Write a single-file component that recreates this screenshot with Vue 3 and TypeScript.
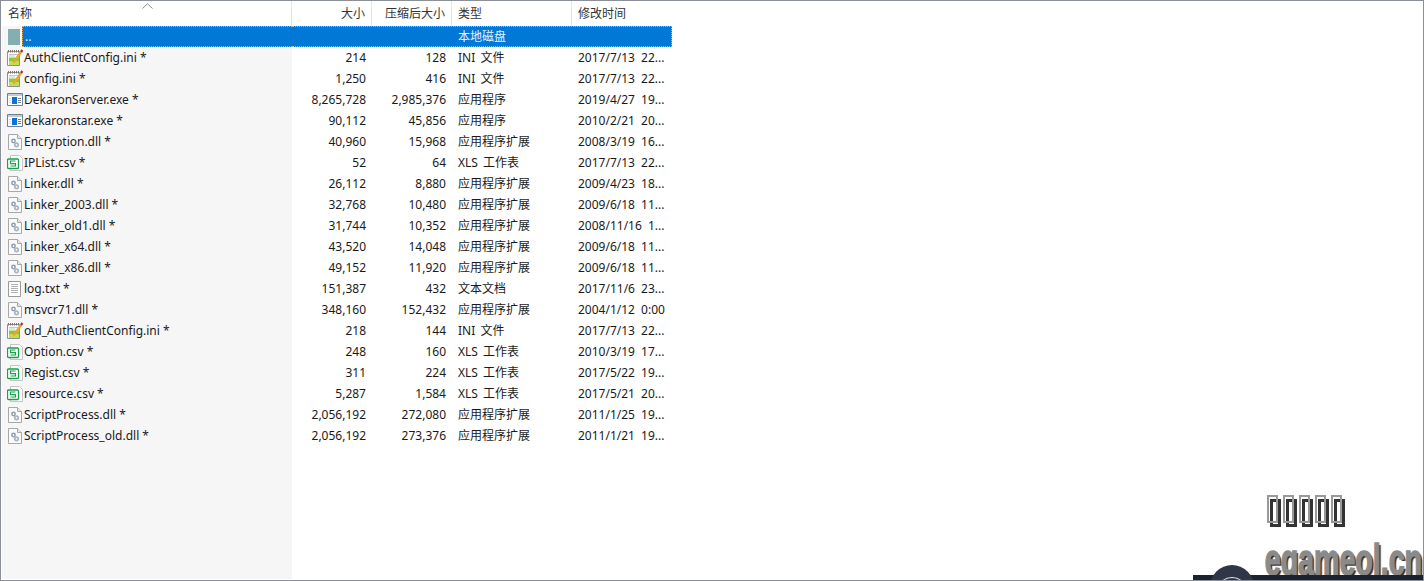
<template>
  <div class="window">
    <div class="list">
      <div class="head">
        <div class="cell name">名称<span class="sort"><svg width="11" height="6" viewBox="0 0 11 6"><path d="M0.5 5.5L5.5 0.8L10.5 5.5" fill="none" stroke="#8a8a8a" /></svg></span></div>
        <div class="cell size right">大小</div>
        <div class="cell packed right">压缩后大小</div>
        <div class="cell type">类型</div>
        <div class="cell time">修改时间</div>
      </div>
      <div class="row up">
        <div class="cell name">
          <span class="icon"><span class="up-icon"></span></span>
          <span class="up-text">..</span>
        </div>
        <div class="selected">
          <div class="cell size"></div>
          <div class="cell packed"></div>
          <div class="cell type">本地磁盘</div>
          <div class="cell time"></div>
        </div>
      </div>
      <div v-for="f in files" :key="f.name" class="row">
        <div class="cell name">
          <span class="icon">
            <svg v-if="f.icon === 'ini'" width="18" height="18" viewBox="0 0 18 18">
              <path d="M1.5 2.5h12v14h-12z" fill="#fff" stroke="#8f8f8f" />
              <path d="M2.5 1v2.5M4.5 1v2.5M6.5 1v2.5M8.5 1v2.5M10.5 1v2.5M12.5 1v2.5" stroke="#777" />
              <path d="M3 5.5h9M3 7h6" stroke="#c8c8c8" />
              <path d="M3 8.5h10V16H3z" fill="#8cc63f" />
              <path d="M3 12h10v4H3z" fill="#c4dc50" />
              <path d="M7.5 13.5L15 3" stroke="#eda52a" stroke-width="2.4" />
              <path d="M15 3l1.4-2" stroke="#a8322a" stroke-width="2.2" />
            </svg>
            <svg v-else-if="f.icon === 'exe'" width="16" height="13" viewBox="0 0 16 13">
              <path d="M0.5 0.5h15v12h-15z" fill="#fff" stroke="#72808e" />
              <path d="M1 1h14v2H1z" fill="#c3ccd5" />
              <path d="M5 4h5v7H5z" fill="#0a72d8" />
              <path d="M11 5.5h3M11 7.5h3M11 9.5h3" stroke="#72808e" />
              <path d="M2 5.5h2M2 7.5h2M2 9.5h2" stroke="#d5dae0" />
            </svg>
            <svg v-else-if="f.icon === 'dll'" width="14" height="16" viewBox="0 0 14 16">
              <path d="M0.5 0.5h9l4 4v11h-13z" fill="#fafafa" stroke="#a8a8a8" />
              <path d="M9.5 0.5v4h4" fill="#e8e8e8" stroke="#a8a8a8" />
              <circle cx="5.5" cy="7" r="2.4" fill="#8f9daa" />
              <circle cx="8.5" cy="10.8" r="2.6" fill="#aab5c0" />
              <circle cx="5.5" cy="7" r="0.9" fill="#fff" />
              <circle cx="8.5" cy="10.8" r="0.9" fill="#fff" />
            </svg>
            <svg v-else-if="f.icon === 'csv'" width="16" height="16" viewBox="0 0 16 16">
              <path d="M3.5 0.5h9l3 3v12h-12z" fill="#fff" stroke="#c4c4c4" />
              <rect x="0.5" y="4" width="11" height="9.5" rx="1" fill="#fff" stroke="#17a04c" stroke-width="1.3" />
              <path d="M8.5 6H3.5v2.6h5v2.4H3.5" fill="none" stroke="#17a04c" stroke-width="1.2" />
            </svg>
            <svg v-else width="13" height="16" viewBox="0 0 13 16">
              <path d="M0.5 0.5h12v15h-12z" fill="#fff" stroke="#9a9a9a" />
              <path d="M3 3.5h7M3 5.5h7M3 7.5h7M3 9.5h7M3 11.5h7" stroke="#b0b0b0" />
            </svg>
          </span>
          <span>{{ f.name }} *</span>
        </div>
        <div class="cell size right">{{ f.size }}</div>
        <div class="cell packed right">{{ f.packed }}</div>
        <div class="cell type">{{ f.type }}</div>
        <div class="cell time">{{ f.time }}</div>
      </div>
    </div>

    <div class="boxes">
      <span v-for="n in 5" :key="n" class="box"></span>
    </div>
    <div class="site">egameol.cn</div>
    <div class="bar"><span class="bar-badge"></span></div>
  </div>
</template>

<script setup lang="ts">
type FileRow = {
  name: string
  size: string
  packed: string
  type: string
  time: string
  icon: 'ini' | 'exe' | 'dll' | 'csv' | 'txt'
}

const DLL = '应用程序扩展'
const XLS = 'XLS 工作表'
const INI = 'INI 文件'
const EXE = '应用程序'

const files: FileRow[] = [
  { name: 'AuthClientConfig.ini', size: '214', packed: '128', type: INI, time: '2017/7/13 22...', icon: 'ini' },
  { name: 'config.ini', size: '1,250', packed: '416', type: INI, time: '2017/7/13 22...', icon: 'ini' },
  { name: 'DekaronServer.exe', size: '8,265,728', packed: '2,985,376', type: EXE, time: '2019/4/27 19...', icon: 'exe' },
  { name: 'dekaronstar.exe', size: '90,112', packed: '45,856', type: EXE, time: '2010/2/21 20...', icon: 'exe' },
  { name: 'Encryption.dll', size: '40,960', packed: '15,968', type: DLL, time: '2008/3/19 16...', icon: 'dll' },
  { name: 'IPList.csv', size: '52', packed: '64', type: XLS, time: '2017/7/13 22...', icon: 'csv' },
  { name: 'Linker.dll', size: '26,112', packed: '8,880', type: DLL, time: '2009/4/23 18...', icon: 'dll' },
  { name: 'Linker_2003.dll', size: '32,768', packed: '10,480', type: DLL, time: '2009/6/18 11...', icon: 'dll' },
  { name: 'Linker_old1.dll', size: '31,744', packed: '10,352', type: DLL, time: '2008/11/16 1...', icon: 'dll' },
  { name: 'Linker_x64.dll', size: '43,520', packed: '14,048', type: DLL, time: '2009/6/18 11...', icon: 'dll' },
  { name: 'Linker_x86.dll', size: '49,152', packed: '11,920', type: DLL, time: '2009/6/18 11...', icon: 'dll' },
  { name: 'log.txt', size: '151,387', packed: '432', type: '文本文档', time: '2017/11/6 23...', icon: 'txt' },
  { name: 'msvcr71.dll', size: '348,160', packed: '152,432', type: DLL, time: '2004/1/12 0:00', icon: 'dll' },
  { name: 'old_AuthClientConfig.ini', size: '218', packed: '144', type: INI, time: '2017/7/13 22...', icon: 'ini' },
  { name: 'Option.csv', size: '248', packed: '160', type: XLS, time: '2010/3/19 17...', icon: 'csv' },
  { name: 'Regist.csv', size: '311', packed: '224', type: XLS, time: '2017/5/22 19...', icon: 'csv' },
  { name: 'resource.csv', size: '5,287', packed: '1,584', type: XLS, time: '2017/5/21 20...', icon: 'csv' },
  { name: 'ScriptProcess.dll', size: '2,056,192', packed: '272,080', type: DLL, time: '2011/1/25 19...', icon: 'dll' },
  { name: 'ScriptProcess_old.dll', size: '2,056,192', packed: '273,376', type: DLL, time: '2011/1/21 19...', icon: 'dll' },
]
</script>

<style>
html,
body {
  margin: 0;
  background: #fff;
}
</style>

<style scoped>
.window {
  position: relative;
  height: 581px;
  box-sizing: border-box;
  border: 1px solid #8a8f9a;
  background: #fff;
  font-family: "Noto Sans", "Noto Sans CJK SC", sans-serif;
  font-size: 12px;
  color: #1a1a1a;
  overflow: hidden;
}

.list {
  width: 671px;
  height: 578px;
  background: linear-gradient(to right, #f6f6f6 290px, #fff 290px) 1px 0 no-repeat;
}

.head {
  display: flex;
  height: 25px;
  background: #fff;
  color: #333;
}

.head .cell {
  height: 25px;
  line-height: 25px;
  border-right: 1px solid #e6e6e6;
}

.row {
  display: flex;
  height: 21px;
  line-height: 21px;
}

.selected {
  display: flex;
  flex: 1;
  min-width: 0;
  box-sizing: border-box;
  line-height: 19px;
  background: #0078d7;
  color: #e8f2fb;
  border: 1px dotted #d9b070;
  border-left: 0;
}

.cell {
  padding: 0 5px 0 6px;
  box-sizing: border-box;
  white-space: nowrap;
  overflow: hidden;
}

.name {
  width: 291px;
  flex: none;
  display: flex;
  align-items: center;
  position: relative;
  padding: 0 0 0 4px;
  overflow: visible;
}

.head .name {
  display: block;
  padding-left: 7px;
}

.sort {
  position: absolute;
  left: 141px;
  top: 0;
  line-height: 6px;
}

.sort svg {
  display: block;
  margin-top: 2px;
}

.icon {
  width: 19px;
  height: 21px;
  display: flex;
  align-items: center;
  justify-content: center;
  flex: none;
}

.up .name {
  padding: 0;
}

.up .icon {
  width: 21px;
  padding-left: 7px;
  box-sizing: border-box;
  justify-content: flex-start;
}

.up-icon {
  width: 12px;
  height: 16px;
  flex: none;
  background: #84aeb0;
}

.up-text {
  flex: 1;
  align-self: stretch;
  box-sizing: border-box;
  line-height: 19px;
  background: #0078d7;
  color: #e8f2fb;
  padding-left: 2px;
  border: 1px dotted #d9b070;
  border-right: 0;
}

.size,
.packed {
  width: 80px;
  flex: none;
}

.type {
  width: 120px;
  flex: none;
  word-spacing: 2px;
}

.time {
  width: 100px;
  flex: none;
  word-spacing: 3px;
  border-right: 0 !important;
}

.selected .time {
  width: auto;
  flex: 1;
}

.right {
  text-align: right;
  padding-right: 6px;
}

/* watermark sits over the empty area of the list */
.boxes {
  position: absolute;
  left: 1266px;
  top: 494px;
  z-index: 0;
  display: flex;
  gap: 5px;
}

.box {
  position: relative;
  display: block;
  width: 11px;
  height: 28px;
  box-sizing: border-box;
  border: 2px solid #999;
}

.box::before {
  content: "";
  position: absolute;
  left: 1px;
  top: 2px;
  width: 11px;
  height: 28px;
  box-sizing: border-box;
  border: 3px solid #333;
  z-index: -1;
}

.bar {
  position: absolute;
  left: 1192px;
  right: -1px;
  top: 574px;
  height: 7px;
  background: #1b2230;
}

.bar-badge {
  position: absolute;
  left: 17px;
  top: -10px;
  width: 44px;
  height: 44px;
  border-radius: 50%;
  background: #2e3648;
}

.bar-badge::after {
  content: "";
  position: absolute;
  left: 9px;
  top: 12px;
  width: 26px;
  height: 20px;
  border: 1px solid #e8e8e8;
  border-radius: 50%;
  box-sizing: border-box;
}

.site {
  position: absolute;
  right: 1px;
  top: 537px;
  font-family: "Liberation Sans", sans-serif;
  font-size: 44px;
  font-weight: bold;
  color: #8a8a8a;
  line-height: 44px;
  transform: scaleX(0.65);
  transform-origin: right;
  -webkit-text-stroke: 1.5px #8a8a8a;
  text-shadow: 3px 2px 1px #333;
}
</style>
